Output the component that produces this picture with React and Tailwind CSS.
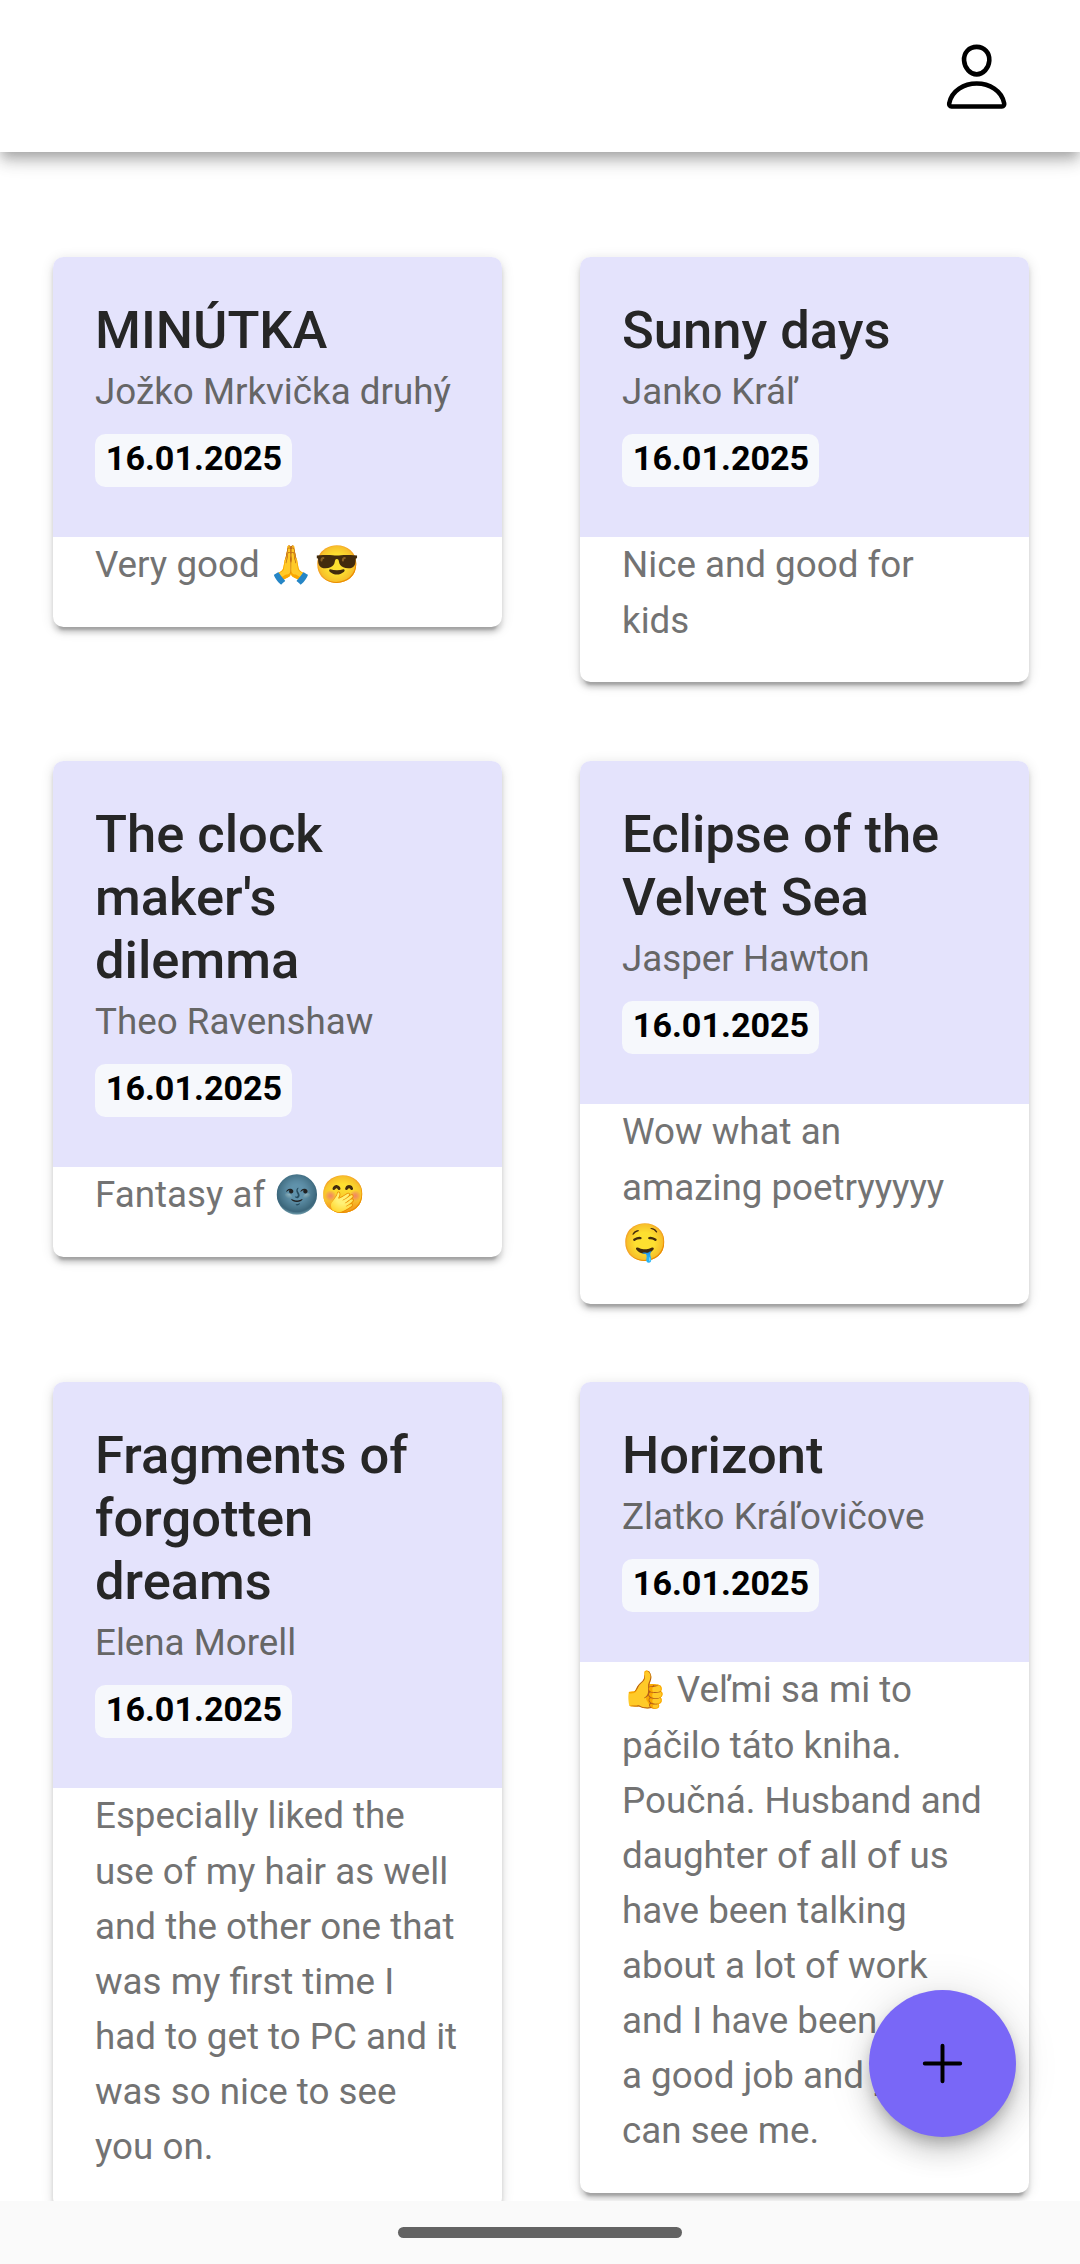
import { IoAdd, IoPersonOutline } from "react-icons/io5";

const columns = [
  [
    { title: ["MINÚTKA"], author: "Jožko Mrkvička druhý", body: ["Very good 🙏😎"], space: "mb-[134.275px]" },
    { title: ["The clock", "maker's", "dilemma"], author: "Theo Ravenshaw", body: ["Fantasy af 🌚🤭"], space: "mb-[125.275px]" },
    {
      title: ["Fragments of", "forgotten", "dreams"],
      author: "Elena Morell",
      body: ["Especially liked the", "use of my hair as well", "and the other one that", "was my first time I", "had to get to PC and it", "was so nice to see", "you on."],
      space: "",
    },
  ],
  [
    { title: ["Sunny days"], author: "Janko Kráľ", body: ["Nice and good for", "kids"], space: "mb-[79.15px]" },
    { title: ["Eclipse of the", "Velvet Sea"], author: "Jasper Hawton", body: ["Wow what an", "amazing poetryyyyy", "🤤"], space: "mb-[78.025px]" },
    {
      title: ["Horizont"],
      author: "Zlatko Kráľovičove",
      body: ["👍 Veľmi sa mi to", "páčilo táto kniha.", "Poučná. Husband and", "daughter of all of us", "have been talking", "about a lot of work", "and I have been doing", "a good job and you", "can see me."],
      space: "",
    },
  ],
];

function Card({ title, author, body, space }) {
  return (
    <article
      className={
        "w-[449px] shrink-0 overflow-hidden rounded-[10.5px] bg-white shadow-[0_7.9px_2.6px_-5.25px_rgba(0,0,0,0.2),0_5.25px_5.25px_rgba(0,0,0,0.14),0_2.6px_13.1px_rgba(0,0,0,0.12)] " +
        space
      }
    >
      <header className="bg-[#e4e3fc] px-[42px] pt-[42px] pb-[50px]">
        <h2 className="text-[52.5px] leading-[63px] font-medium text-[#262626]">
          {title.map((line) => (
            <span key={line} className="block whitespace-nowrap">{line}</span>
          ))}
        </h2>
        <p className="pt-[2px] text-[36.75px] leading-[55px] whitespace-nowrap text-[#666666]">{author}</p>
        <span className="mt-[15px] flex h-[53px] w-[197px] items-start justify-center rounded-[10.5px] bg-[#f6f8fc] pt-[7px] pl-px text-[34.125px] leading-[34px] font-bold text-black">
          16.01.2025
        </span>
      </header>
      <p className="px-[42px] pt-[0.45px] pb-[34.15px] text-[36.75px] leading-[55.125px] text-[#737373]">
        {body.map((line) => (
          <span key={line} className="block h-[55.125px] whitespace-nowrap">{line}</span>
        ))}
      </p>
    </article>
  );
}

export default function App() {
  return (
    <div className="relative flex h-[2264px] w-[1080px] flex-col overflow-hidden bg-white font-[Roboto,'Noto_Color_Emoji',sans-serif]">
      <header className="z-10 flex h-[152px] shrink-0 items-start justify-end bg-white pt-[40px] pr-[66.6px] shadow-[0_5.25px_10.5px_-2.6px_rgba(0,0,0,0.2),0_10.5px_13.1px_rgba(0,0,0,0.14),0_2.6px_26.25px_rgba(0,0,0,0.12)]">
        <IoPersonOutline className="size-[73.4px] text-black" />
      </header>
      <main className="flex min-h-0 flex-1 items-start gap-[78px] overflow-hidden pt-[105px] pl-[53px]">
        {columns.map((cards, i) => (
          <div key={i} className="flex flex-col">
            {cards.map((card) => (
              <Card key={card.author} {...card} />
            ))}
          </div>
        ))}
      </main>
      <footer className="z-20 flex h-[63px] shrink-0 items-start justify-center bg-[#fafafa] pt-[26px]">
        <div className="h-[11px] w-[284px] rounded-full bg-[#636363]" />
      </footer>
      <button
        aria-label="Add"
        className="absolute right-[64px] bottom-[127px] flex size-[147px] items-center justify-center rounded-full bg-[#7967f7] text-black shadow-[0_7.9px_13.1px_-2.6px_rgba(0,0,0,0.2),0_15.75px_26.25px_rgba(0,0,0,0.14),0_2.6px_47.25px_rgba(0,0,0,0.12)]"
      >
        <IoAdd className="size-[63px]" />
      </button>
    </div>
  );
}
